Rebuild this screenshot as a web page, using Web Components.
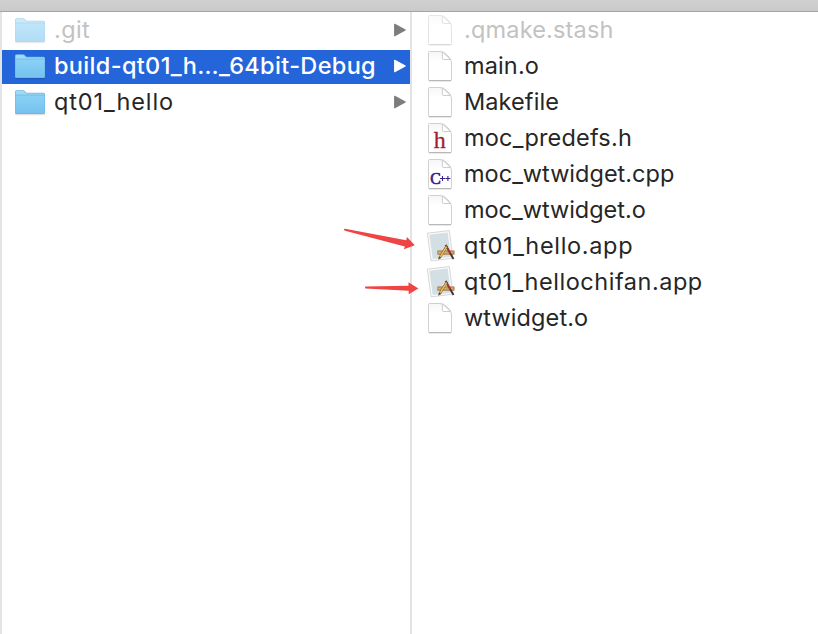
<!DOCTYPE html>
<html lang="en">
<head>
<meta charset="utf-8">
<title>Finder</title>
<style>
html, body { margin: 0; height: 100%; overflow: hidden; background: #fff; }
</style>
</head>
<body>
<finder-window>
  <finder-column slot="first">
    <finder-row icon="folder" fit="36" dim branch>.git</finder-row>
    <finder-row icon="folder" fit="322" selected branch>build-qt01_h…_64bit-Debug</finder-row>
    <finder-row icon="folder" fit="120" branch>qt01_hello</finder-row>
  </finder-column>
  <finder-column slot="second">
    <finder-row icon="doc" fit="149.6" dim>.qmake.stash</finder-row>
    <finder-row icon="doc" fit="75">main.o</finder-row>
    <finder-row icon="doc" fit="95">Makefile</finder-row>
    <finder-row icon="h" fit="168">moc_predefs.h</finder-row>
    <finder-row icon="cpp" fit="210.3">moc_wtwidget.cpp</finder-row>
    <finder-row icon="doc" fit="181.7">moc_wtwidget.o</finder-row>
    <finder-row icon="app" fit="169.2">qt01_hello.app</finder-row>
    <finder-row icon="app" fit="238.8">qt01_hellochifan.app</finder-row>
    <finder-row icon="doc" fit="124.3">wtwidget.o</finder-row>
  </finder-column>
  <pointer-arrows slot="marks"></pointer-arrows>
</finder-window>

<script>
const page = `<path d="M2.5 1.5H13Q16.5 1.5 19 4L22.3 7.3Q24.5 9.8 24.5 13V29.5Q24.5 30.5 23.5 30.5H2.5Q1.5 30.5 1.5 29.5V2.5Q1.5 1.5 2.5 1.5Z" fill="url(#pg)" stroke="#d0d0d0"/>
  <path d="M1.8 30.8H24.2" stroke="#aaa" stroke-width=".9"/>
  <path d="M15.3 2V8Q15.3 9.5 16.8 9.5H23.6Z" fill="#fff" stroke="#ccc"/>`;
const pageDefs = `<defs><linearGradient id="pg" x2="0" y2="1"><stop stop-color="#f6f6f6"/><stop offset=".35" stop-color="#fff"/></linearGradient></defs>`;
const wrap = body => `<svg width="32" height="34" viewBox="0 0 32 34">${pageDefs}${body}</svg>`;
const icons = {
  folder: `<svg width="32" height="34" viewBox="0 0.7 32 34">
    <defs><linearGradient id="fg" x2="0" y2="1"><stop stop-color="#8bd1f6"/><stop offset="1" stop-color="#74c2ee"/></linearGradient></defs>
    <path d="M1.2 29.2H30.8" stroke="#000" stroke-opacity=".13" stroke-width="1.4"/>
    <path d="M1 27.5V6.5Q1 5 2.5 5H9.2Q10.2 5 11 6L11.8 7Q12.3 7.5 13.3 7.5H29.5Q31 7.5 31 9V27.5Q31 28.7 29.8 28.7H2.2Q1 28.7 1 27.5Z" fill="#69b7e3"/>
    <path d="M1.6 8.6V6.6Q1.6 5.6 2.6 5.6H9.1Q9.9 5.6 10.5 6.4L11.3 7.4Q12 8.1 13.2 8.1H29.5Q30.4 8.1 30.4 9V9.5H1.6Z" fill="#a1daf7"/>
    <path d="M1.5 10H30.5V27.2Q30.5 28 29.7 28H2.3Q1.5 28 1.5 27.2Z" fill="url(#fg)"/>
    <path d="M1.5 9.8H30.5" stroke="#73bde6" stroke-width=".6"/></svg>`,
  doc: wrap(page),
  h: wrap(page + `<text x="12.8" y="26" text-anchor="middle" font-family="Liberation Serif, serif" font-size="24" fill="#a51d32" stroke="#a51d32" stroke-width=".3">h</text>`),
  cpp: wrap(page + `<text x="3.3" y="26" font-family="Liberation Serif, serif" font-size="17" textLength="10.5" lengthAdjust="spacingAndGlyphs" fill="#3a218c" stroke="#3a218c" stroke-width=".7">C</text>
    <path d="M13 20.5H18M15.5 18V23M18.4 20.5H23.4M20.9 18V23" stroke="#3a218c" stroke-width="1.1"/>`),
  app: wrap(`<path d="M.4 3.2 22.3 .6 25.9 28.2 4.1 30.9Z" fill="#fafafa" stroke="#cdcdcd" stroke-width=".8"/>
    <path d="M2.4 4.8 20.7 2.6 23.8 26.7 5.7 28.9Z" fill="#d4dfe4"/>
    <path d="M10.7 20.8H27.2V24.4H10.7Z" fill="#c59a60" stroke="#94703e" stroke-width=".6"/>
    <path d="M11.5 22.4H26.5" stroke="#e2be86" stroke-width=".8" stroke-dasharray="2 1"/>
    <path d="M18.6 15 26.5 29" stroke="#4c3038" stroke-width="1.9"/>
    <path d="M18.6 15 23.4 23.5" stroke="#b5342a" stroke-width="1.6"/>
    <path d="M20 15.6 12.6 27.8" stroke="#7a5424" stroke-width="2.3"/>
    <path d="M19.5 16.6 13.2 26.9" stroke="#f0c055" stroke-width="1.5"/>
    <path d="M11.3 29.8 11.7 26.9 13.7 28Z" fill="#4a3c30"/>`)
};

customElements.define('finder-window', class extends HTMLElement {
  constructor() {
    super();
    this.attachShadow({ mode: 'open' }).innerHTML = `
      <style>
        :host { display: flex; flex-direction: column; position: relative; width: 818px; height: 634px; background: #fff; }
        .bar { box-sizing: border-box; flex: none; height: 12px; background: linear-gradient(#d0d0d0, #cacaca); border-bottom: 1px solid #a4a4a4; }
        .panes { flex: 1; display: grid; grid-template-columns: 408px 1fr; border-left: 2px solid #e4e4e4; }
        .right { border-left: 2px solid #e3e3e3; }
      </style>
      <div class="bar"></div>
      <div class="panes"><slot name="first"></slot><div class="right"><slot name="second"></slot></div></div>
      <slot name="marks"></slot>`;
  }
});

customElements.define('finder-column', class extends HTMLElement {
  constructor() {
    super();
    this.attachShadow({ mode: 'open' }).innerHTML = `
      <style>:host { display: flex; flex-direction: column; gap: 2px; padding-top: 2px; }</style><slot></slot>`;
  }
});

customElements.define('finder-row', class extends HTMLElement {
  connectedCallback() {
    if (this.shadowRoot) return;
    const kind = this.getAttribute('icon');
    this.attachShadow({ mode: 'open' }).innerHTML = `
      <style>
        :host { display: flex; align-items: center; height: 34px; box-sizing: border-box;
          padding: 0 3px 0 ${kind === 'folder' ? 12 : 15}px; color: #262626;
          font: 23.5px/34px Inter, "Liberation Sans", sans-serif; white-space: nowrap; }
        :host([selected]) { background: #2465da; color: #fff; font-weight: 500; }
        :host([dim]) { color: #c2c2c2; }
        .icon { display: block; flex: none; width: 32px; height: 34px; margin-right: ${kind === 'folder' ? 8 : 5}px; }
        :host([dim]) .icon { opacity: .55; }
        .icon svg { display: block; overflow: visible; }
        .label { display: block; height: 34px; margin-top: -3px; }
        .branch { margin-left: auto; margin-top: -2px; display: block; }
      </style>
      <span class="icon">${icons[kind]}</span><span class="label"><slot></slot></span>
      ${this.hasAttribute('branch') ? `<svg class="branch" width="14" height="16" viewBox="0 0 14 16"><path d="M1.7 2.3V13.7L12.2 8Z" stroke-linejoin="round" stroke-width="1.2" fill="${this.hasAttribute('selected') ? '#fff' : '#7d7d7d'}" stroke="${this.hasAttribute('selected') ? '#fff' : '#7d7d7d'}"/></svg>` : ''}`;
    // Track each name so that its advance equals the "fit" width.
    const label = this.shadowRoot.querySelector('.label');
    const natural = label.getBoundingClientRect().width;
    const gap = (Number(this.getAttribute('fit')) - natural) / this.textContent.length;
    label.style.letterSpacing = gap.toFixed(3) + 'px';
  }
});

customElements.define('pointer-arrows', class extends HTMLElement {
  constructor() {
    super();
    this.attachShadow({ mode: 'open' }).innerHTML = `
      <style>:host { display: block; position: absolute; left: 340px; top: 224px; } svg { display: block; }</style>
      <svg width="84" height="76" viewBox="340 224 84 76" fill="#ef4444">
        <path d="M344 229Q343.8 230.3 345 230.8L404.8 246.4 404 249.2 414.8 245.3 407 237 406.2 240.3 345 228.7Z"/>
        <path d="M365.5 286.4Q364.3 287.5 365.5 288.4L408.7 290.8V294.3L418.4 288.5 408.5 282.2V285.8Z"/>
      </svg>`;
  }
});
</script>
</body>
</html>
